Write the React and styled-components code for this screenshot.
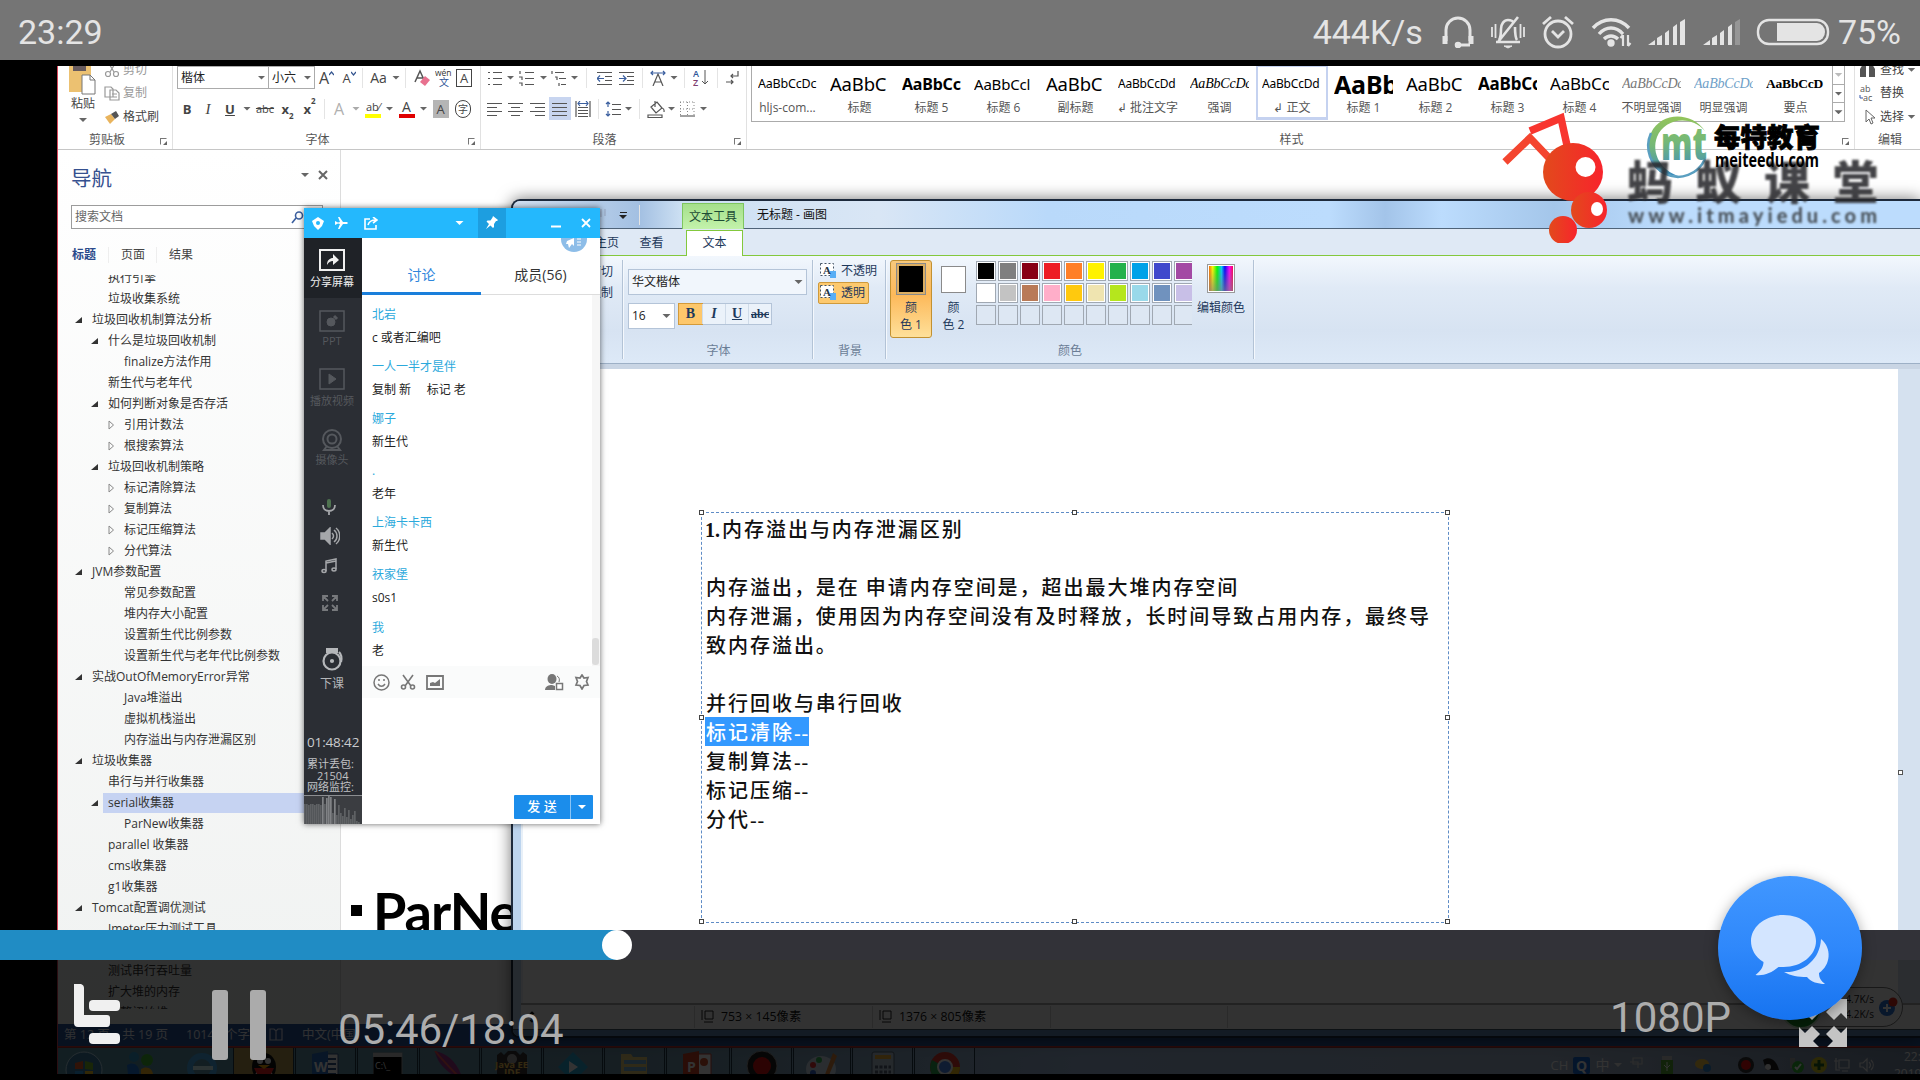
import React from "react";
import styled, { createGlobalStyle, css } from "styled-components";

const UI = `"Open Sans", "Noto Sans CJK SC", sans-serif`;
const ROBOTO = `Roboto, "Noto Sans CJK SC", sans-serif`;

const Global = createGlobalStyle`
  * { box-sizing: border-box; }
  body { margin: 0; background: #000; overflow: hidden; }
`;

const Screen = styled.div`
  position: relative; width: 1920px; height: 1080px; overflow: hidden;
  background: #000; font-family: ${UI}; font-size: 12px; line-height: 16px; color: #333;
  white-space: nowrap;
  svg { display: block; flex: none; }
`;

/* ---------- phone status bar ---------- */
const PhoneBar = styled.header`
  display: flex; align-items: center; height: 60px; padding: 3px 18px 0 18px;
  background: #757575; color: #e4e4e4; font: 400 34px/40px ${ROBOTO};
`;
const PhoneIcons = styled.div`
  display: flex; align-items: center; margin-left: auto; padding-right: 1px;
  > span { line-height: 40px; }
`;
const PhoneSvg = styled.svg`margin-left: ${p => p.$ml}px; margin-right: ${p => p.$mr || 0}px;`;

function HeadsetIcon() {
  return (
    <PhoneSvg $ml={19} width="32" height="32" viewBox="0 0 32 32" fill="none" stroke="#e4e4e4" strokeWidth="3">
      <path d="M4 25V14a12 12 0 0 1 24 0v11" />
      <path d="M3 20v8M29 20v8" strokeWidth="5" />
      <path d="M28 29h-11" /><circle cx="16" cy="29" r="1.800" fill="#e4e4e4" />
    </PhoneSvg>
  );
}
function MuteIcon() {
  return (
    <PhoneSvg $ml={16} width="36" height="34" viewBox="0 0 36 34" fill="none" stroke="#e4e4e4" strokeWidth="2.600">
      <path d="M6 27h24M9 25c2-3 2-7 2-11 0-5 3-9 7-9 3 0 5 1 6 3M27 25c-2-3-2-7-2-13M28 2 8 27" />
      <path d="M14 31h8l-4 2z" fill="#e4e4e4" strokeWidth="1" />
      <path d="M2 12v10M5.500 9v14M34 12v10M30.500 9v14" strokeWidth="1.800" />
    </PhoneSvg>
  );
}
function AlarmIcon() {
  return (
    <PhoneSvg $ml={15} width="34" height="34" viewBox="0 0 34 34" fill="none" stroke="#e4e4e4" strokeWidth="2.800">
      <circle cx="17" cy="19" r="13" /><path d="M11 16l6 6 6-6M2 9l8-7M32 9l-8-7" />
    </PhoneSvg>
  );
}
function WifiIcon() {
  return (
    <PhoneSvg $ml={16} width="42" height="32" viewBox="0 0 42 32" fill="none" stroke="#e4e4e4" strokeWidth="3.400">
      <path d="M2 12C12 1 28 1 38 12M8 18C15 10 25 10 32 18M13 23c4-4 10-4 14 0" />
      <circle cx="20" cy="27" r="2" fill="#e4e4e4" />
      <path d="M32 19v11M37 19v11M29.500 22l2.500-3M39.500 27l-2.500 3" strokeWidth="2.200" />
    </PhoneSvg>
  );
}
function SignalIcon({ dim, ml }) {
  return (
    <PhoneSvg $ml={ml} width="40" height="28" viewBox="0 0 40 28" fill="#e4e4e4">
      <path d="M1 27l7-5v5zM10 20l5-3v10h-5zM18 15l4-3v15h-4zM26 9l4-3v21h-4z" />
      <path d="M33 4l5-3v26h-5z" opacity={dim ? 0.3 : 1} />
    </PhoneSvg>
  );
}
function BatteryIcon() {
  return (
    <PhoneSvg $ml={14} $mr={8} width="74" height="28" viewBox="0 0 74 28">
      <rect x="2" y="2" width="70" height="24" rx="11" fill="none" stroke="#e4e4e4" strokeWidth="2.400" />
      <path d="M21 5h40a8 9 0 0 1 0 18H21z" fill="#e4e4e4" />
    </PhoneSvg>
  );
}

/* ---------- recorded desktop ---------- */
const Desktop = styled.main`
  position: relative; width: 1863px; height: 1008px; margin: 6px 0 0 57px; overflow: hidden; background: #fff;
`;
const Word = styled.section`
  display: flex; flex-direction: column; height: 1008px; border-left: 1px solid #d8485c;
`;
const Ribbon = styled.div`
  display: flex; height: 84px; background: #fff; border-bottom: 1px solid #c6c6c6; color: #444;
`;
const Group = styled.div`
  position: relative; display: flex; flex-direction: column; width: ${p => p.$w}px; height: 83px;
  padding: ${p => p.$pad || "0 0 0 4px"}; overflow: hidden; flex: none;
  ${p => !p.$last && css`border-right: 1px solid #e1e1e1;`}
`;
const GroupFoot = styled.div`
  display: flex; justify-content: center; align-items: center; height: 18px; margin-top: auto; color: #555; padding-right: ${p => p.$pr || 0}px;
`;
const Launcher = styled.i`
  position: absolute; right: 5px; bottom: 4px; width: 7px; height: 7px; border: 1px solid #777; border-right-color: transparent; border-bottom-color: transparent;
  &::after { content: ""; position: absolute; right: -1px; bottom: -1px; border: 2px solid #666; border-left-color: transparent; border-top-color: transparent; }
`;
const ToolRow = styled.div`
  display: flex; align-items: center; height: 23px; margin-top: ${p => p.$mt || 0}px;
`;
const Tool = styled.div`
  display: flex; align-items: center; justify-content: center; width: ${p => p.$w}px; height: 23px; flex: none;
  font-size: ${p => p.$fs || 13}px; color: ${p => p.$c || "#444"};
  font-weight: ${p => (p.$b ? 700 : 400)}; font-style: ${p => (p.$i ? "italic" : "normal")};
  text-decoration: ${p => p.$d || "none"}; background: ${p => p.$bg || "none"};
  ${p => p.$serif && css`font-family: "Liberation Serif", serif;`}
  sub, sup { font-size: 8px; line-height: 8px; }
  sub { align-self: flex-end; } sup { align-self: flex-start; }
`;
const Caret = styled.i`
  width: ${p => p.$w || 9}px; height: 4px; flex: none; background: ${p => p.$c || "#666"};
  clip-path: polygon(calc(50% - 4px) 0, calc(50% + 4px) 0, 50% 100%);
`;
const Divider = styled.i`
  width: ${p => p.$w || 8}px; height: 20px; flex: none; background: linear-gradient(#e4e4e4, #e4e4e4) center / 1px 100% no-repeat;
`;
const WordCombo = styled.div`
  display: flex; align-items: center; justify-content: space-between; width: ${p => p.$w}px; height: 23px; padding: 0 2px 0 3px;
  border: 1px solid #ababab; margin-right: -1px; color: #222; flex: none;
`;
const BoxedLetter = styled.span`
  width: 16px; height: 18px; border: 1px solid #444; text-align: center; line-height: 16px; font-size: 13px;
  ${p => p.$shade && css`border: 0; background: #b5b5b5; line-height: 18px;`}
  ${p => p.$round && css`border-radius: 9px; font-size: 10px;`}
`;
const InkLetter = styled.span`
  border-bottom: 4px solid ${p => p.$ink}; line-height: 13px; height: 18px; width: 16px; text-align: center; font-size: ${p => p.$fs || 14}px;
`;
const PasteArea = styled.div`display: flex; height: 64px;`;
const PasteButton = styled.div`
  display: flex; flex-direction: column; align-items: center; width: 46px; margin-left: -4px;
  > span { margin: 0 0 6px; }
`;
const ClipList = styled.div`display: flex; flex-direction: column; margin-top: -8px;`;
const ClipItem = styled.div`
  display: flex; align-items: center; gap: 3px; height: 23.500px; color: ${p => (p.$off ? "#9a9a9a" : "#444")};
`;
const ClipShift = styled(ClipList)`margin-left: -2px;`;
const Gallery = styled.div`display: flex; height: 56px; border-left: 1px solid #ababab; border-bottom: 1px solid #ababab; width: 1094px;`;
const StyleCell = styled.div`
  width: 72px; height: 55px; padding: 4px 7px 0 6px; overflow: hidden; flex: none;
  ${p => p.$on && css`border: 2px solid #c5d2f0; border-top-width: 1px; border-bottom-width: 3px; padding: 3px 4px 0; height: 54px;`}
`;
const Sample = styled.div`
  height: 28px; line-height: 28px; overflow: hidden; font-size: ${p => p.$fs}px; font-weight: ${p => (p.$b ? 700 : 400)};
  font-style: ${p => (p.$i ? "italic" : "normal")}; color: ${p => p.$c || "#000"}; letter-spacing: -.2px;
  font-family: ${p => (p.$serif ? `"Liberation Serif", serif` : `"Noto Sans", sans-serif`)};
`;
const StyleName = styled.div`text-align: center; color: #555; line-height: 19px; margin: 0 -6px;`;
const GalleryScroll = styled.div`
  width: 14px; margin-left: auto; border-left: 1px solid #ababab; border-right: 1px solid #ababab; display: flex; flex-direction: column;
  > span { flex: 1; display: flex; align-items: center; justify-content: center; }
  > span + span { border-top: 1px solid #ababab; }
`;

const WordBody = styled.div`display: flex; height: 874px;`;
const Nav = styled.aside`
  width: 283px; height: 874px; padding-top: 13px; border-right: 1px solid #dcdcdc; background: linear-gradient(#fff, #f0f2f1); flex: none;
`;
const NavHead = styled.div`
  display: flex; align-items: center; height: 30px; padding: 0 12px 6px 13px;
  > b { font-weight: 400; font-size: 20.500px; line-height: 30px; color: #35508f; margin-right: auto; padding-top: 6px; }
`;
const CloseMark = styled.svg`margin-left: 8px;`;
const Search = styled.div`
  display: flex; align-items: center; justify-content: space-between; width: 252px; height: 24px; margin: 12px 0 0 13px; padding: 0 18px 0 3px;
  border: 1px solid #9c9c9c; background: #fff; color: #666;
`;
const NavTabs = styled.div`display: flex; height: 20px; margin: 16px 0 0 14px; align-items: center;`;
const NavTab = styled.span`
  width: 36px; color: ${p => (p.$on ? "#2b4a8b" : "#444")}; font-weight: ${p => (p.$on ? 700 : 400)};
  & + & { width: 48px; border-left: 1px solid #eee; padding-left: 12px; }
`;
const Tree = styled.div`height: 734px; margin-top: 10px; overflow: hidden;`;
const TreeInner = styled.div`margin-top: -8px;`;
const TreeRow = styled.div`
  display: flex; align-items: center; height: 21px; padding-left: ${p => 13 + (p.$lv - 1) * 16}px; color: #333;
`;
const Twist = styled.span`width: 16px; display: flex; justify-content: center; flex: none;`;
const TreeLabel = styled.span`
  line-height: 20px; margin-left: 5px;
  ${p => p.$on && css`background: #c6d3f2; flex: 1; margin-left: 0; padding-left: 5px;`}
`;
const Doc = styled.div`flex: 1; padding: 740px 0 0 10px; display: flex; align-items: flex-start; background: #fff;`;
const Bullet = styled.i`width: 11px; height: 11px; margin: 15px 11px 0 0; background: #000;`;
const Heading = styled.h1`
  margin: -10px 0 0; font: 700 54px/64px Lato, "Noto Sans", sans-serif; color: #000; letter-spacing: -1px;
`;
const WordStatus = styled.div`
  display: flex; align-items: center; height: 23px; padding-left: 6px; gap: 18px; background: #2b579a; color: #e8eefa; border-bottom: 1px solid #c33; font-size: 12.500px;
`;
const Taskbar = styled.div`
  display: flex; height: 27px; background: linear-gradient(90deg, #5a98ac, #6f95aa 30%, #9fb9da 55%, #a5b8d0 80%, #7a8ea8); border-top: 1px solid #a03030;
`;
const TaskItem = styled.div`
  display: flex; justify-content: center; width: ${p => p.$w || 61}px; height: 26px; overflow: hidden; flex: none; padding-top: 3px; margin-right: 1px;
  background: ${p => p.$bg || "none"};
  ${p => !p.$bare && css`border-left: 1px solid #203848; border-right: 1px solid #203848;`}
`;
const Tray = styled.div`
  display: flex; align-items: center; margin-left: auto; color: #fff; height: 34px; overflow: hidden;
`;
const TrayCell = styled.span`width: ${p => p.$w}px; display: flex; justify-content: center; flex: none; font-size: ${p => p.$fs || 14}px;`;
const TrayClock = styled.div`width: 42px; padding-left: 26px; font-size: 12px; line-height: 17px; overflow: hidden; flex: none; div { margin-left: -10px; }`;

/* ---------- paint window ---------- */
const Paint = styled.section`
  position: absolute; left: 454px; top: 133px; width: 1409px; height: 839px; display: flex; flex-direction: column;
  border: 2px solid #1d2a3c; border-right: 0; border-radius: 9px 0 0 8px; background: #bcd4ee; box-shadow: 0 0 16px rgba(0,0,0,.55); overflow: hidden;
  color: #1e395b;
`;
const PaintTitle = styled.div`
  display: flex; align-items: center; height: 28px; padding-left: 82px; flex: none; border-bottom: 1px solid #4f6378;
  background: linear-gradient(90deg, #d4e2f3 0, #a3c0e2 9%, #cde0f3 12%, #d9e6f5 26%, #b9d9fa 38%, #bcdcfd 58%, #a3c4e9 62%, #bcdcfd 66%, #a4c6ea 74%, #bcdcfd 82%);
`;
const QuickMenu = styled.span`
  display: flex; flex-direction: column; align-items: center; gap: 2px; width: 14px; margin: 2px 4px 0 7px;
  &::before { content: ""; width: 7px; height: 1px; background: #222; }
`;
const ContextTab = styled.span`
  width: 62px; height: 26px; margin: 2px 13px 0 38px; background: linear-gradient(#a5e08b, #c3f2ab); border: 1px solid #7fc65f; border-bottom: 0; text-align: center; line-height: 25px; color: #1c4b34;
`;
const TitleText = styled.span`color: #111;`;
const PaintTabs = styled.div`
  display: flex; height: 27px; flex: none; background: #dfe9f5; border-bottom: 1px solid #83c83c; padding-left: 74px; margin-left: 8px; line-height: 27px;
`;
const PaintTab = styled.span`
  width: ${p => p.$w}px; text-align: center;
  ${p => p.$on && css`background: #fff; border: 1px solid #83c83c; border-bottom: 0; height: 27px; line-height: 24px; margin-top: 1px;`}
`;
const PaintRibbon = styled.div`
  display: flex; height: 108px; flex: none; margin-left: 8px; padding-top: 4px; background: linear-gradient(#f2f7fd 0, #e0eaf6 30%, #d7e3f2 70%, #dde9f7 100%); border-bottom: 1px solid #9db0c6;
`;
const PGroup = styled.div`
  position: relative; display: flex; flex-direction: column; width: ${p => p.$w}px; height: 99px; flex: none; padding: ${p => p.$pad || "0"};
  border-right: 1px solid #b3c3d6; box-shadow: 1px 0 0 #f4f8fd;
`;
const ClipCommands = styled.div`text-align: right; line-height: 21px; span { display: block; }`;
const PLabel = styled.div`margin-top: auto; height: 17px; line-height: 18px; text-align: center; color: #6a7d95; padding-right: 3px;`;
const PCombo = styled.div`
  display: flex; align-items: center; justify-content: space-between; width: ${p => p.$w}px; height: 26px; padding: 0 3px; border: 1px solid #b4c4d8; background: #f1f6fc; color: #222;
  ${p => p.$lit && css`background: #fff;`}
`;
const FormatRow = styled.div`display: flex; margin-top: 8px;`;
const FormatSet = styled.div`display: flex; height: 22px; margin-left: 3px; border: 1px solid #b4c4d8; background: #ebf2fa;`;
const FormatBtn = styled.span`
  width: 23px; text-align: center; font: ${p => (p.$i ? "italic " : "")}700 ${p => p.$fs || 14}px/20px "Liberation Serif", serif; text-decoration: ${p => p.$d || "none"};
  ${p => p.$on && css`background: #fdc76b; outline: 1px solid #d39a3a;`}
  & + & { border-left: 1px solid #cfdbe9; }
`;
const ModeBtn = styled.div`
  display: flex; align-items: center; gap: 4px; height: 22px; width: 51px; padding-left: 1px; border: 1px solid transparent; border-radius: 2px; color: #1e395b;
  ${p => p.$on && css`background: #fdc96e; border-color: #cf9a3c;`}
`;
const ColorsRow = styled.div`display: flex;`;
const ColorPick = styled.div`
  display: flex; flex-direction: column; align-items: center; width: ${p => p.$w}px; height: 78px; padding-top: ${p => (p.$on ? 2 : 5)}px; border: 1px solid transparent; border-radius: 3px; text-align: center; line-height: 17px; color: #1e395b;
  ${p => p.$on && css`background: linear-gradient(#f8c97c, #fdb95a 45%, #fee09a); border-color: #c29131;`}
`;
const BigSwatch = styled.i`
  width: ${p => p.$s}px; height: ${p => p.$s + 2}px; background: ${p => p.$c}; border: 1px solid #8a8a8a; box-shadow: inset 0 0 0 2px ${p => p.$rim || "#fff"}; margin-bottom: ${p => p.$mb}px;
`;
const Palette = styled.div`
  display: grid; grid-template-columns: repeat(10, 20px); grid-auto-rows: 20px; gap: 2px; width: 216px; height: 66px; overflow: hidden; margin: 1px 4px 0 1px;
`;
const Swatch = styled.i`border: 1px solid #a0a8b2; background: ${p => p.$c || "#dde7f3"}; ${p => p.$c && css`box-shadow: inset 0 0 0 1px #fff;`}`;
const EditColors = styled.div`display: flex; flex-direction: column; align-items: center; width: 50px; padding-top: 4px; line-height: 16px; gap: 7px;`;
const Rainbow = styled.i`
  width: 28px; height: 29px; border: 1px solid #999; box-shadow: inset 0 0 0 1px #fff;
  background: linear-gradient(rgba(128,128,128,0), rgba(128,128,128,.7)), linear-gradient(90deg, #f40, #ff0 18%, #0f0 35%, #0cf 52%, #00f 65%, #f0f 82%, #f02);
`;
const CanvasArea = styled.div`display: flex; flex: 1; margin-left: 8px; border-left: 2px solid #e8f0f8; background: #d5e1ef; min-height: 0; border-top: 5px solid #c9d5e4;`;
const Sheet = styled.div`width: 1375px; background: #fff; padding: 143px 0 0 178px;`;
const TextFrame = styled.div`
  position: relative; width: 748px; height: 411px; border: 1px dashed #5f8cc6; padding: 1px 0 0 4px;
  font: 500 20px/29px "Noto Sans CJK SC", sans-serif; letter-spacing: 1.970px; color: #111;
`;
const TextLine = styled.div`
  height: 29px; i { font: 400 20px/20px "Liberation Serif", serif; letter-spacing: 1px; }
  b { font: 700 20px/20px "Liberation Serif", serif; letter-spacing: 0; margin: 0 2px 0 -1px; }
`;
const Selected = styled.span`display: inline-block; height: 29px; background: #3399ff; color: #fff; margin-left: -1px; padding-left: 1px;`;
const Handle = styled.i`
  position: absolute; left: ${p => p.$x}; top: ${p => p.$y}; width: 5px; height: 5px; margin: -3px; background: #fff; border: 1px solid #444;
`;
const SheetGrip = styled.i`width: 5px; height: 5px; margin-top: 401px; border: 1px solid #555; background: #fff;`;
const PaintStatus = styled.div`
  display: flex; align-items: center; height: 26px; margin-left: 8px; flex: none; background: #fbfbfb; border-top: 2px solid #a8a8a8; color: #111; font-size: 12.300px;
`;
const StatusCell = styled.div`
  display: flex; align-items: center; gap: 5px; width: ${p => p.$w}px; height: 22px; padding-left: 5px; border-right: 1px solid #d0d0d0; flex: none;
`;
const PaintEdge = styled.div`height: 7px; flex: none; background: #5f88b4; border-top: 1px solid #456;`;

const SpeedPill = styled.div`
  position: absolute; left: 1722px; top: 921px; width: 124px; height: 40px; border-radius: 20px; border: 1px solid #777; background: #fff; color: #222;
  display: flex; align-items: center; gap: 4px; padding-right: 4px; justify-content: flex-end; font-size: 10px; line-height: 15px;
`;
const GreenOrb = styled.i`width: 42px; height: 42px; border-radius: 50%; background: #1c9a2c; border: 2px solid #cec; margin-right: auto; margin-top: 2px;`;

/* ---------- class chat window ---------- */
const Chat = styled.section`
  position: absolute; left: 247px; top: 142px; width: 296px; height: 616px; display: flex; flex-direction: column;
  background: #fff; box-shadow: 0 0 6px rgba(0,0,0,.6); color: #333;
`;
const ChatTitle = styled.div`display: flex; align-items: center; height: 30px; background: #24b8fd; flex: none;`;
const ChatTool = styled.span`
  width: ${p => p.$w}px; height: 30px; display: flex; align-items: center; justify-content: center; background: ${p => p.$bg || "none"}; flex: none;
`;
const ChatBody = styled.div`display: flex; flex: 1; min-height: 0;`;
const Side = styled.div`
  display: flex; flex-direction: column; width: 58px; background: #2b2e34; color: #55585d; flex: none; overflow: hidden;
`;
const SideItem = styled.div`
  display: flex; flex-direction: column; align-items: center; gap: ${p => p.$gap ?? 3}px; height: ${p => p.$h}px; padding-top: ${p => p.$pt || 0}px; font-size: ${p => p.$fs || 11}px; line-height: 15px; flex: none; padding-right: ${p => p.$pr ?? 2}px;
  ${p => p.$on && css`background: #1f2227; color: #f0f0f0;`}
  ${p => p.$lit && css`color: #b5b7ba;`}
`;
const Clock = styled.div`font-size: 13.500px; line-height: 19px; color: #c9cbce; padding-left: 3px; letter-spacing: -.15px;`;
const NetInfo = styled.div`font-size: 11px; line-height: 11.500px; color: #c0c2c5; padding: 6px 0 2px 3px; div { padding-left: 10px; }`;
const NetGraph = styled.div`flex: 1; border-top: 1px solid #8c8e91; background: #3b3d41; display: flex; align-items: flex-end;`;
const Talk = styled.div`display: flex; flex-direction: column; flex: 1; min-width: 0;`;
const TalkTabs = styled.div`display: flex; height: 57px; border-bottom: 1px solid #ddd; flex: none;`;
const TalkTab = styled.div`
  width: 120px; height: 57px; padding-top: 16px; font-size: 14px; line-height: 42px; text-align: center;
  ${p => p.$on && css`color: #2f86dc; border-bottom: 3px solid #1a7fdb;`}
`;
const Horn = styled.div`
  position: absolute; left: 257px; top: 30px; width: 26px; height: 14px; overflow: hidden;
`;
const Messages = styled.div`flex: 1; padding: 8px 0 0 10px; overflow: hidden; border-right: 8px solid #f6f6f6;`;
const Message = styled.div`
  height: 52.100px; line-height: 23px; white-space: pre; color: #222;
  b { display: block; font-weight: 400; color: #2ba9dc; }
`;
const Thumb = styled.i`position: absolute; right: 1px; top: 430px; width: 7px; height: 27px; border-radius: 3px; background: #dcdcdc;`;
const InputTools = styled.div`display: flex; align-items: center; gap: 10px; height: 32px; padding: 0 10px 0 11px; background: #fafbfb; flex: none;`;
const Spacer = styled.i`flex: 1;`;
const InputArea = styled.div`height: 126px; display: flex; align-items: flex-end; justify-content: flex-end; padding: 0 7px 5px 0; flex: none;`;
const Send = styled.div`
  display: flex; width: 79px; height: 24px; background: #1b8deb; color: #fff; border-radius: 1px; font-size: 13px; line-height: 23px; font-weight: 500;
  > span:first-child { width: 57px; text-align: center; border-right: 1px solid #8ac4f5; }
  > span:last-child { flex: 1; display: flex; align-items: center; justify-content: center; }
`;

const LogoLayer = styled.div`position: absolute; left: 1440px; top: 40px;`;

/* ---------- player overlay ---------- */
const Player = styled.footer`position: absolute; left: 0; top: 930px; width: 1920px; height: 150px; background: rgba(0,0,0,.8);`;
const Seek = styled.div`display: flex; height: 30px; background: #323238;`;
const Played = styled.div`height: 30px; background: #208cc4;`;
const Knob = styled.i`width: 30px; height: 30px; border-radius: 50%; background: #fff; margin-left: -15px;`;
const Controls = styled.div`
  display: flex; align-items: flex-start; height: 120px; padding: 24px 0 0 73px; font: 400 42px/50px ${ROBOTO}; color: #adadad;
`;
const PauseIcon = styled.svg`margin: 6px 0 0 88px;`;
const FullscreenIcon = styled.svg`margin: 14px 72px 0 67px;`;
const TimeText = styled.span`margin: 21px 0 0 70px; letter-spacing: -.1px;`;
const Quality = styled.span`margin: 9px 0 0 auto;`;
const Fab = styled.button`
  position: absolute; left: 1718px; top: 876px; width: 144px; height: 144px; padding: 0; border: 0; border-radius: 50%;
  background: linear-gradient(#4197ff, #2f88fb 50%, #1673f0); box-shadow: 0 3px 14px rgba(0,0,0,.35);
`;

const tree = [
  [2, "执行引擎"], [2, "垃圾收集系统"], [1, "垃圾回收机制算法分析", "o"], [2, "什么是垃圾回收机制", "o"], [3, "finalize方法作用"],
  [2, "新生代与老年代"], [2, "如何判断对象是否存活", "o"], [3, "引用计数法", "c"], [3, "根搜索算法", "c"], [2, "垃圾回收机制策略", "o"],
  [3, "标记清除算法", "c"], [3, "复制算法", "c"], [3, "标记压缩算法", "c"], [3, "分代算法", "c"], [1, "JVM参数配置", "o"],
  [3, "常见参数配置"], [3, "堆内存大小配置"], [3, "设置新生代比例参数"], [3, "设置新生代与老年代比例参数"], [1, "实战OutOfMemoryError异常", "o"],
  [3, "Java堆溢出"], [3, "虚拟机栈溢出"], [3, "内存溢出与内存泄漏区别"], [1, "垃圾收集器", "o"], [2, "串行与并行收集器"],
  [2, "serial收集器", "o", true], [3, "ParNew收集器"], [2, "parallel 收集器"], [2, "cms收集器"], [2, "g1收集器"],
  [1, "Tomcat配置调优测试", "o"], [2, "Jmeter压力测试工具"], [2, "什么是吞吐量"], [2, "测试串行吞吐量"], [2, "扩大堆的内存"], [2, "调整初始堆"],
];

const styleCells = [
  ["AaBbCcDc", "hljs-com...", 12.5], ["AaBbC", "标题", 18.5], ["AaBbCc", "标题 5", 16, { b: 1 }], ["AaBbCcl", "标题 6", 15], ["AaBbC", "副标题", 18.5],
  ["AaBbCcDd", "↲ 批注文字", 12], ["AaBbCcDc", "强调", 14, { i: 1, serif: 1 }], ["AaBbCcDd", "↲ 正文", 12, { on: 1 }], ["AaBb", "标题 1", 25, { b: 1 }],
  ["AaBbC", "标题 2", 18.5], ["AaBbCc", "标题 3", 17, { b: 1 }], ["AaBbCc", "标题 4", 17], ["AaBbCcDc", "不明显强调", 14, { i: 1, serif: 1, c: "#777" }],
  ["AaBbCcDc", "明显强调", 14, { i: 1, serif: 1, c: "#6f9fc8" }], ["AaBbCcD", "要点", 13.5, { b: 1, serif: 1 }],
];

const palette = ["#000", "#7f7f7f", "#880015", "#ed1c24", "#ff7f27", "#fff200", "#22b14c", "#00a2e8", "#3f48cc", "#a349a4",
  "#fff", "#c3c3c3", "#b97a57", "#ffaec9", "#ffc90e", "#efe4b0", "#b5e61d", "#99d9ea", "#7092be", "#c8bfe7",
  ...Array(10).fill("")];

const messages = [["北岩", "c 或者汇编吧"], ["一人一半才是伴", "复制 新     标记 老"], ["娜子", "新生代"], [".", "老年"], ["上海卡卡西", "新生代"], ["祆家堡", "s0s1"], ["我", "老"]];

function Line({ d, w = 16, h = 16, c = "#555", sw = 1.2, children }) {
  return <svg width={w} height={h} viewBox={`0 0 ${w} ${h}`} fill="none" stroke={c} strokeWidth={sw}>{d && <path d={d} />}{children}</svg>;
}

const ALIGN = { left: "M0 2.500h15M0 6.500h10M0 10.500h15M0 14.500h10", center: "M0 2.500h15M3 6.500h9M0 10.500h15M3 14.500h9", right: "M0 2.500h15M5 6.500h10M0 10.500h15M5 14.500h10", full: "M0 2.500h15M0 6.500h15M0 10.500h15M0 14.500h15" };
const LIST = "M1 2.500h2M6 2.500h9M1 8.500h2M6 8.500h9M1 14.500h2M6 14.500h9";

function WordRibbon() {
  return (
    <Ribbon>
      <Group $w={115} $pad="0 0 0 6px">
        <PasteArea>
          <PasteButton>
            <svg width="30" height="30" viewBox="0 0 30 30">
              <path d="M1 0h22v26H1z" fill="#ecc171" /><path d="M5 0h13v5H5z" fill="#665a5e" /><path d="M14 9h8l5 5v14H14z" fill="#fff" stroke="#777" /><path d="M22 9v5h5" fill="none" stroke="#777" />
            </svg>
            <span>粘贴</span><Caret />
          </PasteButton>
          <ClipShift>
            <ClipItem $off><Line c="#999" d="M4 0l6 10M12 0L6 10"><circle cx="4" cy="12" r="2.500" /><circle cx="12" cy="12" r="2.500" /></Line>剪切</ClipItem>
            <ClipItem $off><Line c="#999" d="M1 2h6l2 2v8H1zM6 5h6l3 3v7H6zM8 9h5M8 12h5" />复制</ClipItem>
            <ClipItem><svg width="16" height="16"><path d="M1 8l6-3 4 5-5 5z" fill="#e9b45d" /><path d="M7 5l4 5 4-3-3-5z" fill="#555" /></svg>格式刷</ClipItem>
          </ClipShift>
        </PasteArea>
        <GroupFoot $pr={22}>剪贴板</GroupFoot><Launcher />
      </Group>
      <Group $w={308}>
        <ToolRow>
          <WordCombo $w={92}>楷体<Caret /></WordCombo><WordCombo $w={47}>小六<Caret /></WordCombo>
          <Tool $w={25} $fs={16}>A<Line w={5} h={14} d="M0 4l2.500-3L5 4" c="#35558f" /></Tool><Tool $w={20} $fs={13}>A<Line w={5} h={14} d="M0 1l2.500 3L5 1" c="#35558f" /></Tool><Divider $w={6} />
          <Tool $w={27} $fs={14}>Aa</Tool><Caret $w={8} /><Divider $w={10} />
          <Tool $w={24}><svg width="18" height="18"><path d="M2 13L7 2l5 11M4 9h6" stroke="#555" fill="none" strokeWidth="1.500" /><path d="M7 13l5-6 5 4-5 6z" fill="#e8718f" /></svg></Tool>
          <Tool $w={20}><svg width="18" height="20"><text x="0" y="8" fontSize="8.500" fill="#333">wén</text><text x="4" y="18" fontSize="10" fill="#2f5597">文</text></svg></Tool>
          <Tool $w={20}><BoxedLetter>A</BoxedLetter></Tool>
        </ToolRow>
        <ToolRow $mt={8}>
          <Tool $w={20} $b>B</Tool><Tool $w={22} $i $serif $fs={15}>I</Tool><Tool $w={22} $b $d="underline">U</Tool><Caret $w={12} />
          <Tool $w={24} $fs={11} $d="line-through">abc</Tool><Tool $w={21} $b>x<sub>2</sub></Tool><Tool $w={23} $b>x<sup>2</sup></Tool><Divider $w={6} />
          <Tool $w={24} $fs={16} $c="#b0b0b0">A</Tool><Caret $w={10} $c="#aaa" />
          <Tool $w={24}><InkLetter $ink="#ff0" $fs={11}>ab⁄</InkLetter></Tool><Caret $w={9} />
          <Tool $w={25}><InkLetter $ink="#e00000">A</InkLetter></Tool><Caret $w={9} />
          <Tool $w={25}><BoxedLetter $shade>A</BoxedLetter></Tool><Tool $w={20}><BoxedLetter $round>字</BoxedLetter></Tool>
        </ToolRow>
        <GroupFoot $pr={22}>字体</GroupFoot><Launcher />
      </Group>
      <Group $w={266} $pad="0 0 0 3px">
        <ToolRow>
          <Tool $w={22}><Line d={LIST} /></Tool><Caret /><Tool $w={24}><Line d="M1 1v3M6 2.500h9M0 7h3v3M6 8.500h9M0 13h3v3M6 14.500h9" /></Tool><Caret />
          <Tool $w={22}><Line d="M1 1v3M4 2.500h9M4 7h2v3M8 8.500h7M8 13v3M10 14.500h5" /></Tool><Caret /><Divider $w={15} />
          <Tool $w={22}><Line d="M0 2.500h15M8 6.500h7M8 10.500h7M0 14.500h15"><path d="M0 8.500h7M3 5.500l-3 3 3 3" stroke="#3b5f9f" /></Line></Tool>
          <Tool $w={22}><Line d="M0 2.500h15M8 6.500h7M8 10.500h7M0 14.500h15"><path d="M0 8.500h7M4 5.500l3 3-3 3" stroke="#3b5f9f" /></Line></Tool><Divider $w={8} />
          <Tool $w={24}><Line d="M3 16L8 4l5 12M5 12h6"><path d="M1 3h14M3 1L1 3l2 2M13 1l2 2-2 2" stroke="#3b5f9f" /></Line></Tool><Caret $w={8} /><Divider $w={12} />
          <Tool $w={22}><svg width="16" height="18" fontWeight="600"><text x="0" y="8" fontSize="9" fill="#2f5597">A</text><text x="0" y="17" fontSize="9" fill="#80406f">Z</text><path d="M12 1v14M9 12l3 3 3-3" stroke="#555" fill="none" /></svg></Tool><Divider $w={10} />
          <Tool $w={20}><Line d="M14 1v5H7M9 4L7 6l2 2M2 12h7M7 10l2 2-2 2" /></Tool>
        </ToolRow>
        <ToolRow $mt={8}>
          <Tool $w={21}><Line d={ALIGN.left} /></Tool><Tool $w={22}><Line d={ALIGN.center} /></Tool><Tool $w={22}><Line d={ALIGN.right} /></Tool>
          <Tool $w={22} $bg="#c8d5f0"><Line d={ALIGN.full} /></Tool><Tool $w={23}><Line d="M1 0v16M15 0v16M3 6.500h10M3 9.500h10M3 12.500h10M3 15.500h10"><path d="M3 2.500h10M5 0L3 2.500 5 5M11 0l2 2.500L11 5" stroke="#3b5f9f" /></Line></Tool><Divider $w={8} />
          <Tool $w={22}><Line d="M7 3.500h9M7 8.500h9M7 13.500h9"><path d="M3 1v5M3 10v5M1 3l2-2 2 2M1 13l2 2 2-2" stroke="#3b5f9f" /></Line></Tool><Caret /><Divider $w={12} />
          <Tool $w={22}><Line w={20} h={18} d="M5 7l6-5 5 6-6 5zM9 1v6M16 8c3 1 2 3 2 4M2 15h14v2.500H2z" /></Tool><Caret />
          <Tool $w={23}><svg width="15" height="16" fill="none" stroke="#888"><path d="M.5 1v14M7.500 1v14M14 1v14M0 1h15M0 8h15" strokeDasharray="1 2" /><path d="M0 15h15" stroke="#444" /></svg></Tool><Caret />
        </ToolRow>
        <GroupFoot $pr={21}>段落</GroupFoot><Launcher />
      </Group>
      <Group $w={1108}>
        <Gallery>
          {styleCells.map(([s, n, fs, o = {}], i) => (
            <StyleCell key={i} $on={o.on}><Sample $fs={fs} $b={o.b} $i={o.i} $serif={o.serif} $c={o.c}>{s}</Sample><StyleName>{n}</StyleName></StyleCell>
          ))}
          <GalleryScroll><span><Caret $c="#bbb" /></span><span><Caret /></span><span><Caret /></span></GalleryScroll>
        </Gallery>
        <GroupFoot $pr={22}>样式</GroupFoot><Launcher />
      </Group>
      <Group $w={66} $last $pad="0 0 0 4px">
        <ClipList>
          <ClipItem><svg width="18" height="16" fill="#555"><path d="M1 15V7l3-5h3v13zM10 15V2h3l3 5v8z" /></svg>查找<Caret /></ClipItem>
          <ClipItem><svg width="18" height="18" fill="#555"><text x="1" y="8" fontSize="9">ab</text><text x="4" y="17" fontSize="9">ac</text><path d="M1 11v3h3" stroke="#35a" fill="none" /></svg>替换</ClipItem>
          <ClipItem><Line w={18} d="M7 1v12l3-3 2 5 2-1-2-5h4z" c="#666" sw={1} />选择<Caret /></ClipItem>
        </ClipList>
        <GroupFoot>编辑</GroupFoot>
      </Group>
    </Ribbon>
  );
}

function NavPane() {
  return (
    <Nav>
      <NavHead><b>导航</b><Caret $w={10} /><CloseMark width="10" height="10"><path d="M1 1l8 8M9 1L1 9" stroke="#666" strokeWidth="2" /></CloseMark></NavHead>
      <Search>搜索文档<Line w={13} h={13} c="#3b5f9f" sw={1.6} d="M1 12l4-5"><circle cx="8" cy="4.500" r="3.500" /></Line></Search>
      <NavTabs><NavTab $on>标题</NavTab><NavTab>页面</NavTab><NavTab>结果</NavTab></NavTabs>
      <Tree><TreeInner>
        {tree.map(([lv, t, tw, on]) => (
          <TreeRow key={t} $lv={lv}>
            <Twist>
              {tw === "o" && <svg width="8" height="8"><path d="M7 1v6H0z" fill="#333" /></svg>}
              {tw === "c" && <svg width="7" height="10"><path d="M1 1l4.500 4L1 9z" fill="none" stroke="#888" /></svg>}
            </Twist>
            <TreeLabel $on={on}>{t}</TreeLabel>
          </TreeRow>
        ))}
      </TreeInner></Tree>
    </Nav>
  );
}

function Tasks() {
  return (
    <Taskbar>
      <TaskItem $bare $w={52}><svg width="38" height="38"><circle cx="19" cy="19" r="18" fill="#3f7fa5" stroke="#bde" /><path d="M10 12l8-2v8h-8z" fill="#f0602a" /><path d="M20 10l8 2v7l-8-1z" fill="#7ebc2c" /><path d="M10 20h8v8l-8-2z" fill="#2d9fe8" /><path d="M20 20h8v6l-8 2z" fill="#f8c820" /></svg></TaskItem>
      <TaskItem $bare $w={60}><svg width="36" height="36"><circle cx="11" cy="6" r="5" fill="#39c" /><circle cx="24" cy="9" r="6" fill="#4b3" /><path d="M4 14c6-4 12 0 12 6v14H6z" fill="#27d" /><path d="M18 18c6-4 12 0 12 6v10H18z" fill="#fb2" /></svg></TaskItem>
      <TaskItem $bare $w={60}><svg width="34" height="38" fill="none" stroke="#4ab0f0" strokeWidth="6"><circle cx="17" cy="17" r="12" /><path d="M8 17h20" stroke="#dff" strokeWidth="4" /></svg></TaskItem>
      <TaskItem $bg="#b79a50"><svg width="36" height="36"><ellipse cx="18" cy="16" rx="12" ry="14" fill="#111" /><ellipse cx="18" cy="26" rx="9" ry="9" fill="#fff" /><circle cx="14" cy="10" r="3" fill="#fff" /><circle cx="22" cy="10" r="3" fill="#fff" /><path d="M8 17h20l-3 6H11z" fill="#e22" /><path d="M12 14h12l-6 4z" fill="#fa0" /></svg></TaskItem>
      <TaskItem><svg width="28" height="32"><path d="M14 3h12v26H14z" fill="#fff" stroke="#358" /><path d="M16 8h8M16 13h8M16 18h8M16 23h8" stroke="#358" strokeWidth="2" /><path d="M0 3l16-3v32L0 29z" fill="#2b6fc0" /><text x="2" y="21" fontSize="14" fontWeight="700" fill="#fff">W</text></svg></TaskItem>
      <TaskItem><svg width="30" height="30"><rect y="2" width="29" height="26" fill="#000" stroke="#aaa" /><rect y="2" width="29" height="4" fill="#ccc" /><text x="2" y="18" fontSize="9" fill="#fff">C:\_</text></svg></TaskItem>
      <TaskItem><svg width="34" height="34"><path d="M2 0c12 2 24 12 28 30C18 24 4 14 2 0z" fill="#a0358c" /><path d="M2 0c8 10 16 18 28 30" stroke="#e55" fill="none" strokeWidth="2" /></svg></TaskItem>
      <TaskItem><svg width="34" height="34"><path d="M2 4l4-3 3 3 4-4h8l4 4 3-3 4 3v28H2z" fill="#383433" /><circle cx="17" cy="8" r="5" fill="#aaa" /><text x="0" y="17" fontSize="9.500" fontWeight="700" fill="#fc5">Java EE</text><text x="9" y="26" fontSize="10" fontWeight="700" fill="#fc5">IDE</text></svg></TaskItem>
      <TaskItem $w={60}><svg width="32" height="32"><path d="M16 1l15 15-15 15L1 16z" fill="#2aa9d8" /><path d="M12 10l9 6-9 6z" fill="#fff" /></svg></TaskItem>
      <TaskItem><svg width="32" height="32"><path d="M2 3h10l2 3h14v24H2z" fill="#e9cf7a" /><path d="M5 9h22v4H5zM5 16h22v4H5z" fill="#79b4dc" /></svg></TaskItem>
      <TaskItem $w={64}><svg width="30" height="32"><path d="M14 3h14v26H14z" fill="#fff" stroke="#c43" /><circle cx="21" cy="11" r="4" fill="#d5522b" /><path d="M0 3l16-3v32L0 29z" fill="#d04424" /><text x="4" y="21" fontSize="14" fontWeight="700" fill="#fff">P</text></svg></TaskItem>
      <TaskItem><svg width="32" height="32"><circle cx="16" cy="15" r="15" fill="#222" stroke="#999" /><circle cx="16" cy="15" r="9" fill="#d11" /></svg></TaskItem>
      <TaskItem $w={58}><svg width="34" height="34"><ellipse cx="16" cy="18" rx="15" ry="13" fill="#cfe0ee" /><circle cx="8" cy="14" r="3" fill="#e33" /><circle cx="14" cy="9" r="3" fill="#3b5" /><circle cx="8" cy="22" r="3" fill="#36c" /><path d="M28 2l4 3-10 24h-4z" fill="#e0873c" /></svg></TaskItem>
      <TaskItem><svg width="24" height="32"><rect x="1" y="1" width="22" height="30" rx="2" fill="#b9cbdb" stroke="#567" /><rect x="4" y="4" width="16" height="4" fill="#f6b53a" /><path d="M4 16h16M4 21h16M4 26h16" stroke="#567" strokeWidth="3" strokeDasharray="3 1.500" /></svg></TaskItem>
      <TaskItem><svg width="32" height="32"><circle cx="16" cy="16" r="15" fill="#e33b2e" /><path d="M16 16L3 9a15 15 0 0 0 10 22z" fill="#2da94f" /><path d="M16 16h15a15 15 0 0 1-18 15z" fill="#fbc116" /><circle cx="16" cy="16" r="7" fill="#4a8af4" stroke="#fff" strokeWidth="2" /></svg></TaskItem>
      <Tray>
        <TrayCell $w={23} $fs={13}>CH</TrayCell>
        <TrayCell $w={21}><svg width="17" height="17"><rect width="17" height="17" rx="2" fill="#1769d8" /><text x="3" y="14" fontSize="14" fontWeight="700" fill="#fff">Q</text></svg></TrayCell>
        <TrayCell $w={21} $fs={14}>中</TrayCell><Caret $c="#eee" $w={10} />
        <TrayCell $w={28}><Line d="M4 1h9v6H4zM1 5h8v6" c="#ddd" /></TrayCell>
        <TrayCell $w={32}><svg width="12" height="18"><rect x="1" y="0" width="10" height="4" fill="#ccc" /><rect y="4" width="12" height="14" fill="#5a3" /><path d="M6 6v9M3 9l3 3 3-3" stroke="#fff" fill="none" /></svg></TrayCell>
        <TrayCell $w={50}><svg width="36" height="16"><ellipse cx="12" cy="7" rx="7" ry="5" fill="#fc4" /><circle cx="17" cy="11" r="4" fill="#38c" /></svg></TrayCell>
        <TrayCell $w={26}><svg width="16" height="16"><circle cx="8" cy="8" r="8" fill="#333" /><circle cx="8" cy="8" r="5" fill="#e11" /></svg></TrayCell>
        <TrayCell $w={24}><svg width="16" height="16"><path d="M0 3c8-5 14 2 16 10H3z" fill="#222" /><circle cx="5" cy="10" r="3" fill="#eee" /></svg></TrayCell>
        <TrayCell $w={25}><svg width="16" height="16"><path d="M2 1h5v10H2z" fill="#aaa" /><circle cx="10" cy="10" r="6" fill="#3b3" /><path d="M7 10l2 2 4-5" stroke="#fff" fill="none" strokeWidth="2" /></svg></TrayCell>
        <TrayCell $w={21}><svg width="16" height="16"><circle cx="8" cy="8" r="8" fill="#dc2" /><path d="M8 3v10M3 8h10" stroke="#262" strokeWidth="3" /></svg></TrayCell>
        <TrayCell $w={26}><Line d="M5 3h10v8H5zM8 14h6M2 1v12h4M0 4h4" c="#eee" /></TrayCell>
        <TrayCell $w={23}><Line d="M1 6h3l4-4v12l-4-4H1zM10 5c2 2 2 4 0 6M12 3c3 3 3 7 0 10" c="#eee" /></TrayCell>
        <TrayClock>22:<div>2019</div></TrayClock>
      </Tray>
    </Taskbar>
  );
}

function LetterPatch() {
  return <svg width="17" height="16"><rect x=".5" y=".5" width="13" height="12" fill="#fff" stroke="#456" strokeDasharray="2 2" /><path d="M10 8h6v7h-6z" fill="#58aef5" /><text x="3" y="11" fontSize="11" fontWeight="700" fontFamily="Liberation Serif, serif" fill="#234">A</text></svg>;
}

function PaintWindow() {
  return (
    <Paint>
      <PaintTitle>
        <Line w={14} c="#9aaac5" d="M6 2v8M10 2v7" />
        <QuickMenu><Caret $c="#222" /></QuickMenu><Divider $w={10} />
        <ContextTab>文本工具</ContextTab><TitleText>无标题 - 画图</TitleText>
      </PaintTitle>
      <PaintTabs><PaintTab $w={22}>主页</PaintTab><PaintTab $w={69}>查看</PaintTab><PaintTab $w={57} $on>文本</PaintTab></PaintTabs>
      <PaintRibbon>
        <PGroup $w={102} $pad="1px 9px 0 0"><ClipCommands><span>剪切</span><span>复制</span></ClipCommands></PGroup>
        <PGroup $w={190} $pad="9px 0 0 5px">
          <PCombo $w={179}>华文楷体<Caret /></PCombo>
          <FormatRow><PCombo $w={47} $lit>16<Caret /></PCombo><FormatSet><FormatBtn $on>B</FormatBtn><FormatBtn $i>I</FormatBtn><FormatBtn $d="underline">U</FormatBtn><FormatBtn $fs={12} $d="line-through">abc</FormatBtn></FormatSet></FormatRow>
          <PLabel>字体</PLabel>
        </PGroup>
        <PGroup $w={73} $pad="0 0 0 5px"><ModeBtn><LetterPatch />不透明</ModeBtn><ModeBtn $on><LetterPatch />透明</ModeBtn><PLabel>背景</PLabel></PGroup>
        <PGroup $w={368} $pad="0 0 0 4px">
          <ColorsRow>
            <ColorPick $w={42} $on><BigSwatch $s={30} $c="#000" $rim="#dcae62" $mb={4} />颜<br />色 1</ColorPick>
            <ColorPick $w={43}><BigSwatch $s={25} $c="#fff" $mb={6} />颜<br />色 2</ColorPick>
            <Palette>{palette.map((c, i) => <Swatch key={i} $c={c} />)}</Palette>
            <EditColors><Rainbow />编辑颜色</EditColors>
          </ColorsRow>
          <PLabel>颜色</PLabel>
        </PGroup>
      </PaintRibbon>
      <CanvasArea>
        <Sheet>
          <TextFrame>
            <TextLine><b>1.</b>内存溢出与内存泄漏区别</TextLine>
            <TextLine />
            <TextLine>内存溢出，是在<i> </i>申请内存空间是，超出最大堆内存空间</TextLine>
            <TextLine>内存泄漏，使用因为内存空间没有及时释放，长时间导致占用内存，最终导</TextLine>
            <TextLine>致内存溢出。</TextLine>
            <TextLine />
            <TextLine>并行回收与串行回收</TextLine>
            <TextLine><Selected>标记清除<i>--</i></Selected></TextLine>
            <TextLine>复制算法<i>--</i></TextLine>
            <TextLine>标记压缩<i>--</i></TextLine>
            <TextLine>分代<i>--</i></TextLine>
            {["0%", "50%", "100%"].map(x => ["0%", "50%", "100%"].map(y => (x === "50%" && y === "50%" ? null : <Handle key={x + y} $x={x} $y={y} />)))}
          </TextFrame>
        </Sheet>
        <SheetGrip />
      </CanvasArea>
      <PaintStatus>
        <StatusCell $w={174}><Line d="M6 3v10M4 5l2-2 2 2M4 11l2 2 2-2" c="#111" /></StatusCell>
        <StatusCell $w={178}><Line d="M2 1v10M5 2h8v8H5zM4 13h9" c="#222" sw={1} />753 × 145像素</StatusCell>
        <StatusCell $w={178}><Line d="M2 1v10M5 2h8v8H5zM4 13h9" c="#222" sw={1} />1376 × 805像素</StatusCell>
        <StatusCell $w={177} />
      </PaintStatus>
      <PaintEdge />
    </Paint>
  );
}

const bars = [21, 21, 20, 21, 21, 20, 21, 21, 20, 28, 21, 27, 29, 28, 12, 26, 10, 20, 12, 9, 17, 8, 15, 6, 10, 14, 4, 3];

function ChatWindow() {
  return (
    <Chat>
      <ChatTitle>
        <ChatTool $w={28}><svg width="14" height="13"><path d="M7 0l6 4-2 5-4 4-4-4-2-5z" fill="#fff" /><circle cx="7" cy="6" r="2" fill="#24b8fd" /></svg></ChatTool>
        <ChatTool $w={18}><svg width="14" height="12" fill="#fff"><path d="M1 4l3 1.500L6 5 4 0h1.500L9 5h4l1 1-1 1H9l-3.500 5H4l2-5-2-.500L1 8V4z" /></svg></ChatTool>
        <ChatTool $w={42}><Line w={14} h={13} c="#fff" sw={1.6} d="M6 2H1v10h11V8M4 8c1-4 4-5 8-5M9 0l4 3-4 3" /></ChatTool>
        <ChatTool $w={49} /><ChatTool $w={37}><Caret $c="#fff" $w={10} /></ChatTool>
        <ChatTool $w={28} $bg="#1d9ee0"><svg width="14" height="14"><path d="M8 0l5 4-1 1-1 0-2 3 0 3-1 1-2.500-2.500L1 13l3-5L1.500 5.500l1-1 3 0 2-3z" fill="#fff" /></svg></ChatTool>
        <ChatTool $w={32} />
        <ChatTool $w={35}><svg width="10" height="12"><path d="M0 9.500h10" stroke="#fff" strokeWidth="2" /></svg></ChatTool>
        <ChatTool $w={26}><svg width="10" height="10"><path d="M1 1l8 8M9 1L1 9" stroke="#fff" strokeWidth="1.800" /></svg></ChatTool>
      </ChatTitle>
      <Horn><svg width="26" height="14"><circle cx="13" cy="1" r="13" fill="#8dbde8" /><path d="M6 3l7-3v8l-2-2-3 4-1-4H5z" fill="#fff" /><path d="M16 1h4M16 4h4M16 7h4" stroke="#fff" /></svg></Horn>
      <ChatBody>
        <Side>
          <SideItem $h={60} $pt={11} $on><svg width="27" height="22"><rect x="1" y="1" width="24" height="20" fill="none" stroke="#f0f0f0" strokeWidth="2" /><path d="M8 16c0-5 3-7 6-7V5l6 6-6 5v-4c-3 0-4 1-6 4z" fill="#f0f0f0" /></svg>分享屏幕</SideItem>
          <SideItem $h={58} $pt={12} $gap={1}><svg width="27" height="22" fill="none" stroke="#55585d"><rect x="1" y="1" width="24" height="20" strokeWidth="1.500" /><circle cx="12" cy="12" r="4" fill="#55585d" /><path d="M15 6l3 3" strokeWidth="3" /></svg>PPT</SideItem>
          <SideItem $h={60} $pt={12}><svg width="27" height="22" fill="none" stroke="#55585d"><rect x="1" y="1" width="24" height="20" strokeWidth="1.500" /><path d="M10 6l7 5-7 5z" fill="#55585d" /></svg>播放视频</SideItem>
          <SideItem $h={82} $pt={13} $gap={1}><Line w={22} h={22} c="#55585d" sw={2} d="M6 17l-3 4h16l-3-4"><circle cx="11" cy="10" r="9" /><circle cx="11" cy="10" r="4.500" /></Line>摄像头</SideItem>
          <SideItem $h={29} $pr={9}><Line w={16} h={18} c="#a5a7aa" sw={1.8} d="M2 7c0 8 12 8 12 0M8 13v4"><rect x="6" y="1" width="4" height="9" rx="2" fill="#4f7350" stroke="none" /></Line></SideItem>
          <SideItem $h={31} $pr={7}><Line w={20} h={18} c="#a5a7aa" sw={1.5} d="M12 6c2 2 2 4 0 6M14 3c4 3 4 9 0 12M16 1c5 4 5 12 0 16"><path d="M1 6h4l5-5v16l-5-5H1z" fill="#a5a7aa" /></Line></SideItem>
          <SideItem $h={37} $pr={8}><Line w={16} h={16} c="#a5a7aa" sw={1.5} d="M5 13V3l10-2v10M5 5l10-2"><ellipse cx="3" cy="13" rx="2" ry="1.500" /><ellipse cx="13" cy="11.500" rx="2" ry="1.500" /></Line></SideItem>
          <SideItem $h={53} $pr={6}><Line w={16} h={16} c="#77797c" sw={1.8} d="M1 6V1h5M10 1h5v5M15 10v5h-5M6 15H1v-5M2 2l4 4M14 2l-4 4M14 14l-4-4M2 14l4-4" /></SideItem>
          <SideItem $h={85} $gap={5} $fs={12} $lit><svg width="24" height="23" fill="none" stroke="#b5b7ba" strokeWidth="2.200"><path d="M6 0h12v5H6z" fill="#b5b7ba" stroke="none" /><path d="M19 4c3 3 3 6 2 10" /><circle cx="12" cy="13" r="8.500" /><circle cx="12" cy="13" r="1" /></svg>下课</SideItem>
          <Clock>01:48:42</Clock>
          <NetInfo>累计丢包:<div>21504</div>网络监控:</NetInfo>
          <NetGraph><svg width="58" height="29">{bars.map((h, i) => <rect key={i} x={i * 2} y={29 - h} width="1.700" height={h} fill={h > 22 ? "#808285" : "#5f6164"} />)}</svg></NetGraph>
        </Side>
        <Talk>
          <TalkTabs><TalkTab $on>讨论</TalkTab><TalkTab>成员(56)</TalkTab></TalkTabs>
          <Messages>{messages.map(([n, m]) => <Message key={n}><b>{n}</b>{m}</Message>)}</Messages>
          <InputTools>
            <Line w={17} h={17} c="#777" sw={1.5} d="M5 10c2 3 5 3 7 0M6 5v2M11 5v2"><circle cx="8.500" cy="8.500" r="7.500" /></Line>
            <Line c="#777" sw={1.6} d="M3 1l8 11M13 1L5 12"><circle cx="3.500" cy="13" r="2" /><circle cx="12.500" cy="13" r="2" /></Line>
            <svg width="18" height="15"><path d="M1 1h16v13H1z" fill="none" stroke="#777" strokeWidth="1.800" /><path d="M4 11V8l3-1 2 1 5-4v7z" fill="#777" /></svg>
            <Spacer />
            <svg width="19" height="17" fill="#777"><ellipse cx="7" cy="5" rx="4.500" ry="5" /><path d="M0 16c0-4 4-5 7-5l3 1v4z" /><rect x="11.500" y="9.500" width="6" height="6" fill="#fff" stroke="#777" strokeWidth="1.500" /><path d="M12 2c2 1 3 3 2 6" stroke="#777" fill="none" /></svg>
            <Line c="#777" sw={1.7} d="M8 1l2 3 4-.500-1.500 4L14 11l-4 .500L8 15l-2-3.500L2 11l1.500-3.500L2 3.500 6 4z" />
          </InputTools>
          <InputArea><Send><span>发 送</span><span><Caret $c="#fff" $w={8} /></span></Send></InputArea>
        </Talk>
      </ChatBody>
      <Thumb />
    </Chat>
  );
}

/* Watermarks of the two schools over the recording */
function Logos() {
  return (
    <LogoLayer>
      <svg width="400" height="142" viewBox="1497 106 400 142">
        <defs>
          <linearGradient id="ant" x1="0" x2="1"><stop offset="0" stopColor="#e24a1c" /><stop offset="1" stopColor="#f8242c" /></linearGradient>
          <linearGradient id="mt" x1="0" y1="0" x2="0" y2="1"><stop offset="0" stopColor="#93c45a" /><stop offset=".5" stopColor="#74b878" /><stop offset="1" stopColor="#3c8cc0" /></linearGradient>
          <clipPath id="base"><rect x="1497" y="106" width="400" height="137" /></clipPath>
          <filter id="soft"><feGaussianBlur stdDeviation=".8" /></filter>
        </defs>
        <g clipPath="url(#base)">
          <path d="M1568 150l-7-32-31 13" fill="none" stroke="#f8352f" strokeWidth="7.500" />
          <path d="M1551 160l-21-22-25 24" fill="none" stroke="#f4452f" strokeWidth="7.500" />
          <ellipse cx="1573" cy="172" rx="30" ry="29" fill="url(#ant)" /><ellipse cx="1589" cy="210" rx="18" ry="18" fill="url(#ant)" /><ellipse cx="1563" cy="230" rx="14" ry="14" fill="url(#ant)" />
          <circle cx="1585.500" cy="167" r="10" fill="#fff" /><ellipse cx="1597" cy="209" rx="6" ry="7" fill="#fff" />
        </g>
        <path d="M1705 131c-14-20-44-19-54 2-9 22 5 43 28 43-18-5-28-23-22-39 7-18 33-23 48-6z" fill="url(#mt)" />
        <path d="M1651 133a28 29 0 0 0 54 26" fill="none" stroke="#5a9fc0" strokeWidth="2.500" />
        <text x="1661" y="160" fontSize="46" fontFamily="Open Sans, sans-serif" fontWeight="800" textLength="46" lengthAdjust="spacingAndGlyphs" fill="url(#mt)">mt</text>
        <g fontFamily="Noto Sans CJK SC, sans-serif" fontWeight="900">
          <text x="1627" y="199" fontSize="46" letterSpacing="22.500" fill="#2b2b2d" opacity=".88" filter="url(#soft)">蚂蚁课堂</text>
          <text x="1714" y="147" fontSize="26.500" fill="#000" stroke="#000" strokeWidth=".8">每特教育</text>
        </g>
        <text x="1715" y="167" fontSize="19" fontWeight="700" fontFamily="Open Sans, sans-serif" textLength="104" lengthAdjust="spacingAndGlyphs" fill="#000">meiteedu.com</text>
        <text x="1628" y="223" fontSize="20" fontWeight="900" fontFamily="Lato, sans-serif" textLength="249" fill="#4c545d" filter="url(#soft)">www.itmayiedu.com</text>
      </svg>
    </LogoLayer>
  );
}

export default function App() {
  const played = 617;
  return (
    <Screen>
      <Global />
      <PhoneBar>
        <span>23:29</span>
        <PhoneIcons>
          <span>444K/s</span><HeadsetIcon /><MuteIcon /><AlarmIcon /><WifiIcon /><SignalIcon ml={14} /><SignalIcon ml={15} dim /><BatteryIcon /><span>75%</span>
        </PhoneIcons>
      </PhoneBar>
      <Desktop>
        <Word>
          <WordRibbon />
          <WordBody><NavPane /><Doc><Bullet /><Heading>ParNew</Heading></Doc></WordBody>
          <WordStatus><span>第 12 页，共 19 页</span><span>10147 个字</span><Line d="M2 2h4l2 2 2-2h4v11H2zM8 4v9" c="#dde" /><span>中文(中国)</span></WordStatus>
          <Tasks />
        </Word>
        <PaintWindow />
        <SpeedPill><GreenOrb /><div>4.7K/s<br />4.2K/s</div><svg width="20" height="20"><circle cx="9" cy="11" r="8" fill="#2a72d8" /><path d="M9 7v8M5 11h8" stroke="#fff" strokeWidth="2" /><circle cx="15" cy="5" r="4.500" fill="#e02a1c" /></svg></SpeedPill>
        <ChatWindow />
        <Logos />
      </Desktop>
      <Player>
        <Seek><Played style={{ width: played }} /><Knob /></Seek>
        <Controls>
          <svg width="50" height="62"><g fill="#f0f0f0"><path d="M1 0h7q3 1 3 4v27h23q3 0 3 3v5q0 4-3 4H5q-4 0-4-4z" /><rect x="16" y="16" width="31" height="11" rx="4" /><rect x="16" y="49" width="31" height="11" rx="4" /></g></svg>
          <PauseIcon width="57" height="71"><g fill="#ababab"><rect x="1" width="16" height="70" rx="3" /><rect x="39" width="16" height="70" rx="3" /></g></PauseIcon>
          <TimeText>05:46/18:04</TimeText>
          <Quality>1080P</Quality>
          <FullscreenIcon width="50" height="50" viewBox="0 0 50 50" fill="#c4c4c4">
            <path d="M49 1v20l-6-6-7 7-8-8 7-7-6-6zM1 1h20l-6 6 7 7-8 8-7-7-6 6zM1 49V29l6 6 7-7 8 8-7 7 6 6zM49 49H29l6-6-7-7 8-8 7 7 6-6z" />
          </FullscreenIcon>
        </Controls>
      </Player>
      <Fab>
        <svg width="144" height="144" fill="#d3e5ff">
          <path d="M65.500 39c18 0 32.500 11.500 32.500 26S83.500 91 65.500 91h-5c-7 6-15 9-23 8 5-4 8-8 8-13C37 81 33 73 33 65c0-14.500 14.500-26 32.500-26z" />
          <path d="M103 63c11 9 10 26-2 34 0 5 2 8 6 11-7 0-14-2-18-7-9 0-16-1-23-5 19 1 36-12 37-33z" />
        </svg>
      </Fab>
    </Screen>
  );
}
